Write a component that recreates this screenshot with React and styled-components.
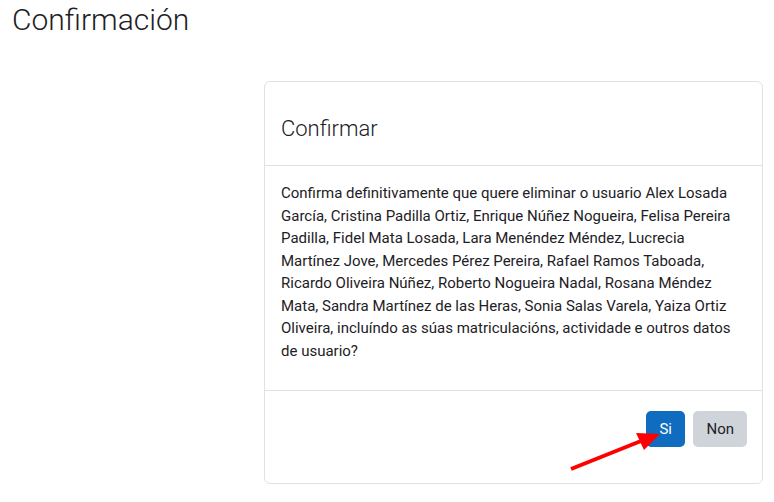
import React from 'react'
import styled, { createGlobalStyle } from 'styled-components'

const Global = createGlobalStyle`
  body {
    margin: 0;
    background: #fff;
    font-family: Roboto, "Liberation Sans", sans-serif;
    color: #1d2125;
  }
`

const Page = styled.div`
  padding: 0 12px;
`

const PageTitle = styled.h2`
  margin: 0;
  padding-top: 2px;
  font-size: 30px;
  font-weight: 300;
  line-height: 36px;
  color: #1d2125;
`

const Layout = styled.div`
  display: grid;
  grid-template-columns: 252px 499px;
  margin-top: 43px;
`

const Card = styled.div`
  grid-column: 2;
  border: 1px solid #dee2e6;
  border-radius: 6px;
  background: #fff;
  display: flex;
  flex-direction: column;
`

const Header = styled.div`
  padding: 34px 16px 23px;
  border-bottom: 1px solid #dee2e6;
`

const HeaderTitle = styled.h5`
  margin: 0;
  font-size: 22px;
  font-weight: 300;
  line-height: 26px;
`

const Body = styled.div`
  padding: 16px 16px 13px;
  p {
    margin: 0 0 15px;
    font-size: 15px;
    line-height: 22.5px;
  }
`

const Footer = styled.div`
  position: relative;
  border-top: 1px solid #dee2e6;
  padding: 20px 15px 36px;
  display: flex;
  justify-content: flex-end;
  gap: 8px;
`

const Button = styled.button`
  height: 36px;
  padding: 0 ${p => (p.$primary ? 13.5 : 13)}px;
  border: none;
  border-radius: 5px;
  font-family: Roboto, "Liberation Sans", sans-serif;
  font-size: 15px;
  background: ${p => (p.$primary ? '#0f6cbf' : '#ced4da')};
  color: ${p => (p.$primary ? '#fff' : '#1d2125')};
`

const Arrow = styled.svg`
  position: absolute;
  left: 300px;
  top: 38px;
  overflow: visible;
`

const names =
  'Confirma definitivamente que quere eliminar o usuario Alex Losada García, Cristina Padilla Ortiz, Enrique Núñez Nogueira, Felisa Pereira Padilla, Fidel Mata Losada, Lara Menéndez Méndez, Lucrecia Martínez Jove, Mercedes Pérez Pereira, Rafael Ramos Taboada, Ricardo Oliveira Núñez, Roberto Nogueira Nadal, Rosana Méndez Mata, Sandra Martínez de las Heras, Sonia Salas Varela, Yaiza Ortiz Oliveira, incluíndo as súas matriculacións, actividade e outros datos de usuario?'

export default function App() {
  return (
    <Page>
      <Global />
      <PageTitle>Confirmación</PageTitle>
      <Layout>
        <Card>
          <Header>
            <HeaderTitle>Confirmar</HeaderTitle>
          </Header>
          <Body>
            <p>{names}</p>
          </Body>
          <Footer>
            <Button $primary>Si</Button>
            <Button>Non</Button>
            <Arrow width="100" height="45" viewBox="0 0 100 45">
              <line x1="6" y1="40" x2="76" y2="12" stroke="#f00" strokeWidth="4" />
              <polygon points="95,5 71,4 79,21" fill="#f00" />
            </Arrow>
          </Footer>
        </Card>
      </Layout>
    </Page>
  )
}
